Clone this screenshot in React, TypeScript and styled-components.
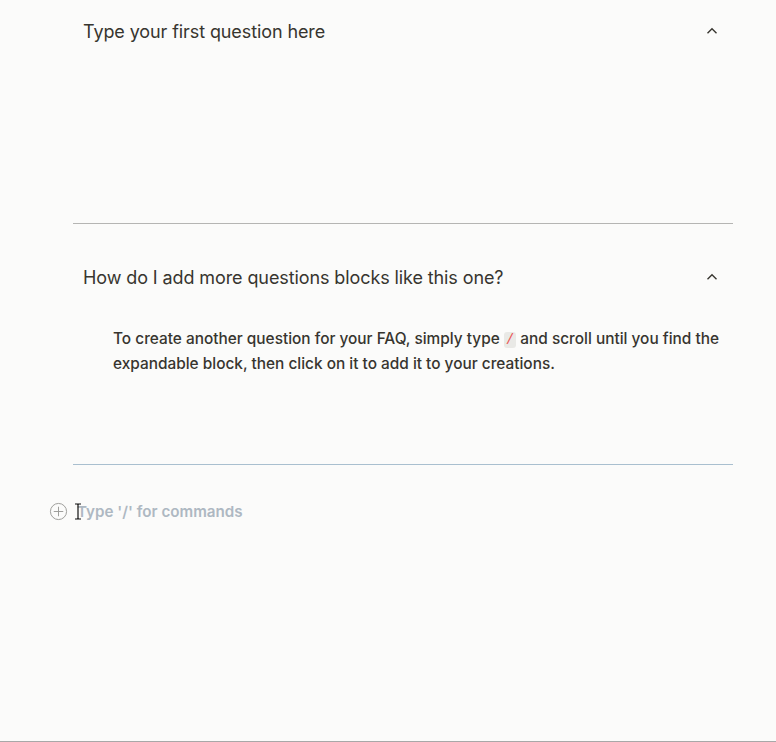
import styled, { createGlobalStyle } from 'styled-components';
import { FC } from 'react';

const GlobalStyle = createGlobalStyle`
  html, body {
    margin: 0;
    padding: 0;
    background: #fbfbfa;
  }
  body {
    font-family: Inter, "Noto Sans", sans-serif;
    -webkit-font-smoothing: antialiased;
  }
`;

const faqs = [
  {
    question: 'Type your first question here',
    dividerColor: '#b5b5b3',
  },
  {
    question: 'How do I add more questions blocks like this one?',
    dividerColor: '#a9bfcf',
  },
];

const Page = styled.div`
  width: 776px;
  height: 742px;
  box-sizing: border-box;
  border-bottom: 1px solid #a8a8a8;
  background: #fbfbfa;
  overflow: hidden;
`;

const Column = styled.div`
  margin: 0 43px 0 73px;
  display: flex;
  flex-direction: column;
`;

const Block = styled.section<{ $divider: string; $h: number }>`
  display: flex;
  flex-direction: column;
  height: ${(p) => p.$h}px;
  box-sizing: border-box;
  border-bottom: 1px solid ${(p) => p.$divider};
`;

const Header = styled.div`
  display: flex;
  align-items: center;
  justify-content: space-between;
  height: 62px;
  padding: 0 14px 0 10px;
`;

const Question = styled.h2`
  margin: 0;
  font-size: 18px;
  font-weight: 400;
  color: #37352f;
  letter-spacing: -0.1px;
`;

const Chevron = styled.svg`
  width: 14px;
  height: 14px;
  color: #37352f;
`;

const Answer = styled.p`
  margin: 0;
  padding: 18px 0 0 40px;
  font-size: 15.4px;
  line-height: 25px;
  font-weight: 500;
  color: #37352f;
`;

const Code = styled.code`
  font-family: "Liberation Mono", monospace;
  font-size: 14px;
  line-height: 1;
  color: #eb5757;
  background: rgba(135, 131, 120, 0.15);
  border-radius: 3px;
  padding: 0 2px;
`;

const Spacer = styled.div<{ $h: number }>`
  height: ${(p) => p.$h}px;
`;

const EmptyLine = styled.div`
  display: flex;
  align-items: center;
  gap: 9px;
  margin: 35px 0 0 49px;
  height: 22px;
`;

const AddIcon = styled.svg`
  width: 19px;
  height: 19px;
  color: #9a9a97;
`;

const Placeholder = styled.span`
  position: relative;
  display: inline-flex;
  align-items: center;
  font-size: 15.2px;
  font-weight: 600;
  color: #aeb8c2;
`;

const IBeam = styled.svg`
  position: absolute;
  left: -3px;
  top: 1px;
  width: 8px;
  height: 17px;
`;

const ChevronUp: FC = () => (
  <Chevron viewBox="0 0 14 14" fill="none">
    <path d="M2.5 9.2 L7 4.8 L11.5 9.2" stroke="currentColor" strokeWidth="1.4" />
  </Chevron>
);

const FaqHeader: FC<{ text: string }> = ({ text }) => (
  <Header>
    <Question>{text}</Question>
    <ChevronUp />
  </Header>
);

export default function App() {
  return (
    <Page>
      <GlobalStyle />
      <Column>
        <Block $divider={faqs[0].dividerColor} $h={224}>
          <FaqHeader text={faqs[0].question} />
        </Block>
        <Block $divider={faqs[1].dividerColor} $h={241}>
          <Spacer $h={22} />
          <FaqHeader text={faqs[1].question} />
          <Answer>
            To create another question for your FAQ, simply type <Code>/</Code> and scroll until you find the
            expandable block, then click on it to add it to your creations.
          </Answer>
        </Block>
      </Column>
      <EmptyLine>
        <AddIcon viewBox="0 0 20 20" fill="none">
          <circle cx="10" cy="10" r="8.5" stroke="currentColor" strokeWidth="1" />
          <path d="M10 5v10M5 10h10" stroke="currentColor" strokeWidth="1" />
        </AddIcon>
        <Placeholder>
          <IBeam viewBox="0 0 8 17" fill="none">
            <path d="M1 1h2.5l0.5 0.8l0.5-0.8H7M4 2v13M1 16h2.5l0.5-0.8l0.5 0.8H7" stroke="#111" strokeWidth="1.2" />
          </IBeam>
          Type '/' for commands
        </Placeholder>
      </EmptyLine>
    </Page>
  );
}
